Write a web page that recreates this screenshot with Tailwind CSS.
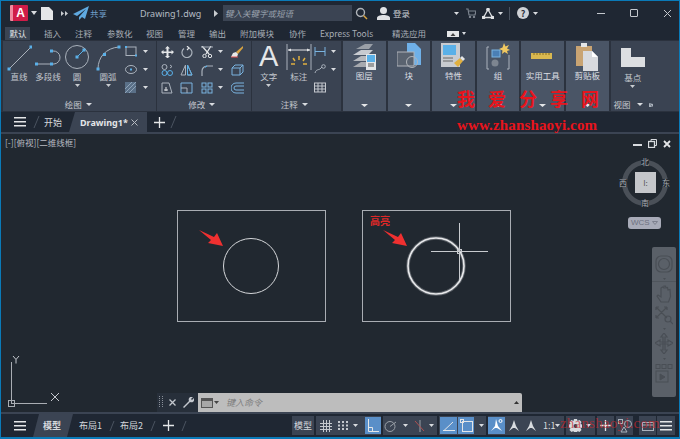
<!DOCTYPE html>
<html lang="en">
  <head>
    <meta charset="UTF-8" />
    <title>Drawing1.dwg</title>
    <script src="https://cdn.jsdelivr.net/npm/@tailwindcss/browser@4"></script>
  </head>
  <body class="bg-[#212830]">
    <div class="relative w-[680px] h-[439px] overflow-hidden flex flex-col border-x border-t border-b-[2px] border-[#0a7ab8] bg-[#212830] text-[10px] leading-none whitespace-nowrap text-[#c4c8ce] font-['Noto_Sans_CJK_SC','Noto_Sans',sans-serif]">

      <!-- title bar -->
      <div class="h-[24px] shrink-0 flex items-center bg-[#1f2733]">
        <div class="ml-[9px] w-[18px] h-[16px] rounded-[1px] bg-[#d01c48] border-l-[3px] border-[#f08aa0] flex items-center justify-center text-white text-[12px] font-bold font-['Liberation_Sans',sans-serif]">A</div>
        <svg class="ml-[3px]" width="6" height="4"><path d="M0 0h6L3 4z" fill="#d8dbdf" /></svg>
        <svg class="ml-[4px]" width="12" height="13"><path d="M0 0h8l4 4v9H0z" fill="#e4e6e8" /></svg>
        <svg class="ml-[8px]" width="7" height="7"><path d="M0 1l3 2.500L0 6zM4 1l3 2.500L4 6z" fill="#c8ccd0" /></svg>
        <svg class="ml-[5px]" width="16" height="14"><path d="M16 0L0 8l4 2 9-7-7 8v3l3-3 3 2z" fill="#5fa9e0" /></svg>
        <span class="ml-[1px] w-[17px] text-[#6f9fca] text-[8.500px]">共享</span>
        <span class="ml-[33px] w-[60px] text-[9px] text-[#b5bcc4] font-['Noto_Sans',sans-serif]">Drawing1.dwg</span>
        <svg class="ml-[14px]" width="4" height="7"><path d="M0 0l4 3.500L0 7z" fill="#c8ccd0" /></svg>
        <div class="ml-[5px] w-[129px] h-[16px] bg-[#3b4453] flex items-center pl-[2px] italic text-[8.500px] text-[#9aa2ad]">键入关键字或短语</div>
        <svg class="ml-[3px]" width="13" height="13" fill="none" stroke="#aeb3b9" stroke-width="1.400"><circle cx="5.500" cy="5.500" r="4" /><path d="M8.500 8.500L12 12" stroke="#d9a441" /></svg>
        <svg class="ml-[9px]" width="13" height="13" fill="#e0e2e5"><circle cx="6.500" cy="3.500" r="3.500" /><path d="M0 13v-2c0-2 3-3 6.500-3s6.500 1 6.500 3v2z" /></svg>
        <span class="ml-[3px] w-[18px] text-[8.500px] text-[#c9cdd2]">登录</span>
        <svg class="ml-[43px]" width="5" height="3"><path d="M0 0h5L2.500 3z" fill="#d8dbdf" /></svg>
        <svg class="ml-[7px]" width="10" height="10" fill="none" stroke="#7d8590" stroke-width="1.200"><path d="M0 1h2l1 6h6l1-4H3" /><circle cx="4" cy="9" r=".6" /><circle cx="8" cy="9" r=".6" /></svg>
        <svg class="ml-[6px]" width="12" height="11" fill="none" stroke="#dfe1e4" stroke-width="1.300"><path d="M6 1.500L1.500 9.500h9z" /><circle cx="6" cy="1.500" r="1.200" fill="#dfe1e4" /><circle cx="1.500" cy="9.500" r="1.200" fill="#dfe1e4" /><circle cx="10.500" cy="9.500" r="1.200" fill="#dfe1e4" /></svg>
        <svg class="ml-[4px]" width="5" height="3"><path d="M0 0h5L2.500 3z" fill="#d8dbdf" /></svg>
        <div class="ml-[6px] w-px h-[13px] bg-[#4a5360]"></div>
        <div class="ml-[7px] w-[12px] h-[12px] rounded-full bg-[#cfd2d6] flex items-center justify-center text-[9px] font-bold text-[#2a313c]">?</div>
        <svg class="ml-[4px]" width="5" height="3"><path d="M0 0h5L2.500 3z" fill="#d8dbdf" /></svg>
        <div class="ml-[59px] w-[8px] h-px bg-[#c4c8ce]"></div>
        <div class="ml-[25px] w-[8px] h-[8px] rounded-[1px] border border-[#c4c8ce]"></div>
        <svg class="ml-[25px]" width="9" height="9" stroke="#c4c8ce"><path d="M1 1l7 7M8 1L1 8" /></svg>
      </div>

      <!-- ribbon tabs -->
      <div class="h-[15px] shrink-0 flex items-end bg-[#1f2733] text-[8.500px] text-[#a7adb5]">
        <span class="ml-[4px] w-[25px] h-[13px] bg-[#3b4453] text-[#e2e4e7] flex items-center justify-center pl-[1px]">默认</span>
        <div class="ml-[14px] flex items-center h-[13px]">
          <span class="w-[17px]">插入</span>
          <span class="ml-[14px] w-[17px]">注释</span>
          <span class="ml-[15px] w-[25px]">参数化</span>
          <span class="ml-[14px] w-[17px]">视图</span>
          <span class="ml-[15px] w-[17px]">管理</span>
          <span class="ml-[14px] w-[17px]">输出</span>
          <span class="ml-[14px] w-[35px]">附加模块</span>
          <span class="ml-[14px] w-[17px]">协作</span>
          <span class="ml-[14px] w-[57px]">Express Tools</span>
          <span class="ml-[15px] w-[34px]">精选应用</span>
          <svg class="ml-[21px]" width="12" height="6"><rect width="12" height="6" fill="#e4e6e8" /><path d="M3.500 5l2.500-3 2.500 3z" fill="#444" /></svg>
          <svg class="ml-[3px]" width="4" height="3"><path d="M0 0h4L2 3z" fill="#d8dbdf" /></svg>
        </div>
      </div>

      <!-- ribbon -->
      <div class="h-[72px] shrink-0 flex bg-[#2b323e] pt-px pb-px pl-[2px] gap-px text-[8.500px]">
        <!-- 绘图 -->
        <div class="w-[154px] bg-[#3a4352] flex flex-col">
          <div class="flex h-[57px]">
            <div class="w-[32px] flex flex-col items-center">
              <svg class="mt-[2px]" width="26" height="28" fill="none" stroke="#aab2bc"><path d="M3 26L25 4" /><rect x="1.500" y="24.500" width="3" height="3" fill="#5ab0e8" stroke="none" /><rect x="23.500" y="2.500" width="3" height="3" fill="#5ab0e8" stroke="none" /></svg>
              <span class="mt-[1px]">直线</span>
            </div>
            <div class="w-[26px] flex flex-col items-center">
              <svg class="mt-[2px]" width="26" height="28" fill="none" stroke="#aab2bc"><path d="M2 21h17M17 8h1a6.500 6.500 0 0 1 1 13" /><rect x="0" y="19.500" width="3" height="3" fill="#5ab0e8" stroke="none" /><rect x="15" y="19.500" width="3" height="3" fill="#5ab0e8" stroke="none" /><rect x="15" y="6.500" width="3" height="3" fill="#5ab0e8" stroke="none" /></svg>
              <span class="mt-[1px]">多段线</span>
            </div>
            <div class="w-[32px] flex flex-col items-center">
              <svg class="mt-[1px]" width="26" height="29" fill="none" stroke="#aab2bc"><circle cx="13" cy="15" r="11.500" /><path d="M13 15l7-7" stroke="#5ab0e8" /><rect x="11.500" y="13.500" width="3" height="3" fill="#5ab0e8" stroke="none" /><rect x="18.500" y="6.500" width="3" height="3" fill="#5ab0e8" stroke="none" /></svg>
              <span class="mt-[1px]">圆</span>
              <svg class="mt-[3px]" width="5" height="3"><path d="M0 0h5L2.500 3z" fill="#c8ccd0" /></svg>
            </div>
            <div class="w-[30px] flex flex-col items-center">
              <svg class="mt-[2px]" width="26" height="28" fill="none" stroke="#aab2bc"><path d="M3 26C3 14 11 5 24 4" /><rect x="1.500" y="24.500" width="3" height="3" fill="#5ab0e8" stroke="none" /><rect x="8" y="10" width="3" height="3" fill="#5ab0e8" stroke="none" /><rect x="22.500" y="2.500" width="3" height="3" fill="#5ab0e8" stroke="none" /></svg>
              <span class="mt-[1px]">圆弧</span>
              <svg class="mt-[3px]" width="5" height="3"><path d="M0 0h5L2.500 3z" fill="#c8ccd0" /></svg>
            </div>
            <div class="ml-[2px] flex flex-col pt-[5px] gap-[7px]">
              <div class="flex items-center h-[11px]">
                <svg width="12" height="11" fill="none" stroke="#aab2bc"><rect x="1" y="1" width="10" height="8.500" /><rect y="0" width="2" height="2" fill="#5ab0e8" stroke="none" /><rect x="10" y="8.500" width="2" height="2" fill="#5ab0e8" stroke="none" /></svg>
                <svg class="ml-[6px]" width="5" height="3"><path d="M0 0h5L2.500 3z" fill="#d8dbdf" /></svg>
              </div>
              <div class="flex items-center h-[11px]">
                <svg width="12" height="11" fill="none" stroke="#aab2bc"><ellipse cx="6" cy="5.500" rx="5.500" ry="4" /><rect x="5" y="4.500" width="2" height="2" fill="#5ab0e8" stroke="none" /></svg>
                <svg class="ml-[6px]" width="5" height="3"><path d="M0 0h5L2.500 3z" fill="#d8dbdf" /></svg>
              </div>
              <div class="flex items-center h-[11px]">
                <svg width="12" height="11"><rect width="11" height="11" fill="#5a7088" /><path d="M0 7l7-7M0 11L11 0M4 11l7-7" stroke="#8fa3b8" /></svg>
                <svg class="ml-[6px]" width="5" height="3"><path d="M0 0h5L2.500 3z" fill="#d8dbdf" /></svg>
              </div>
            </div>
          </div>
          <div class="flex-1 flex items-center justify-center gap-[4px] pr-[2px]">绘图 <svg width="6" height="3"><path d="M0 0h6L3 3z" fill="#d8dbdf" /></svg></div>
        </div>
        <!-- 修改 -->
        <div class="w-[95px] bg-[#3a4352] flex flex-col">
          <div class="h-[57px] grid grid-cols-[20px_21px_30px_20px] grid-rows-[11px_11px_11px] gap-y-[7px] pt-[5px] pl-[3px]">
            <svg width="13" height="12" class="ml-[1px]" fill="#e4e6e8"><path d="M6.500 0l2.500 2.500H7.500v3h3V4L13 6l-2.500 2.500V7h-3v3H9l-2.500 2.500L4 10h1.500V7h-3v1.500L0 6l2.500-2V5.500h3v-3H4z" /></svg>
            <svg width="13" height="12" fill="none" stroke="#aab2bc" stroke-width="1.200"><path d="M9 2a5 5 0 1 1-5 .5" /><path d="M7 0l2 2-2 2" stroke="#e4e6e8" /></svg>
            <div class="flex items-center">
              <svg width="13" height="12" fill="none" stroke="#e4e6e8"><path d="M1 0l7 8M10 0L5 8" stroke-width="1.300" /><circle cx="3.500" cy="10" r="1.700" /><circle cx="9" cy="10" r="1.700" /><path d="M0 1h12" stroke="#aab2bc" /></svg>
              <svg class="ml-[4px]" width="5" height="3"><path d="M0 0h5L2.500 3z" fill="#d8dbdf" /></svg>
            </div>
            <svg width="13" height="12"><path d="M12 0L5 6l2 2 5-6z" fill="#d9a441" /><path d="M0 11l2-4 3-1 2 2-1 3z" fill="#e8e8e8" /><path d="M0 11h7" stroke="#e05050" /></svg>

            <svg width="13" height="12" class="ml-[1px]" fill="none" stroke="#aab2bc"><circle cx="3.500" cy="3" r="2.500" /><path d="M9 1l2 1.500L9 4" /><circle cx="3.500" cy="9" r="2.500" stroke="#5ab0e8" /><circle cx="9" cy="9" r="2.500" stroke="#5ab0e8" /></svg>
            <svg width="13" height="12" fill="none" stroke="#aab2bc"><path d="M5.500 1v10H1zM7.500 1v10H12z" /><path d="M7.500 1v10H12z" stroke="#5ab0e8" /></svg>
            <div class="flex items-center">
              <svg width="13" height="12" fill="none" stroke="#aab2bc" stroke-width="1.200"><path d="M1 12V7a5 5 0 0 1 5-5h6" /><path d="M4 3.500a5 5 0 0 1 2-1.500" stroke="#5ab0e8" /></svg>
              <svg class="ml-[4px]" width="5" height="3"><path d="M0 0h5L2.500 3z" fill="#d8dbdf" /></svg>
            </div>
            <svg width="13" height="12" fill="none" stroke="#7ab4e0"><path d="M1 4h8v7H1zM1 4l3-3h8v7l-3 3M9 4l3-3" /></svg>

            <svg width="13" height="12" class="ml-[1px]" fill="none" stroke="#aab2bc"><path d="M1 1h7l3 10H1z" /><path d="M5 5v4M3 8h4" stroke="#e4e6e8" /></svg>
            <svg width="13" height="12" fill="none" stroke="#7ab4e0"><path d="M1 1h11v10H1z" /><path d="M1 6h6v5" stroke="#aab2bc" /></svg>
            <div class="flex items-center">
              <svg width="13" height="12" fill="none" stroke="#7ab4e0"><rect x="1" y="1" width="4" height="4" /><rect x="7" y="1" width="4" height="4" /><rect x="1" y="7" width="4" height="4" /><rect x="7" y="7" width="4" height="4" /></svg>
              <svg class="ml-[4px]" width="5" height="3"><path d="M0 0h5L2.500 3z" fill="#d8dbdf" /></svg>
            </div>
            <svg width="13" height="12" fill="none" stroke="#7ab4e0"><path d="M13 1H5a4.500 4.500 0 0 0 0 10h8M13 4H5a1.500 1.500 0 0 0 0 4h8" /></svg>
          </div>
          <div class="flex-1 flex items-center justify-center gap-[4px] pr-[4px]">修改 <svg width="6" height="3"><path d="M0 0h6L3 3z" fill="#d8dbdf" /></svg></div>
        </div>
        <!-- 注释 -->
        <div class="w-[90px] bg-[#3a4352] flex flex-col">
          <div class="flex h-[57px]">
            <div class="w-[34px] flex flex-col items-center">
              <span class="mt-[2px] h-[26px] text-[29px] leading-[26px] text-[#e4e6e8] font-['Liberation_Sans',sans-serif]">A</span>
              <span class="mt-[3px]">文字</span>
              <svg class="mt-[3px]" width="5" height="3"><path d="M0 0h5L2.500 3z" fill="#c8ccd0" /></svg>
            </div>
            <div class="w-[26px] flex flex-col items-center">
              <svg class="mt-[3px]" width="26" height="27" fill="none" stroke="#aab2bc"><path d="M1 0v26M25 0v26" /><path d="M2 6h22" stroke="#e4e6e8" /><path d="M2 6l3-1.500v3zM24 6l-3-1.500v3z" fill="#e4e6e8" stroke="none" /><path d="M13 12v4M7 14l2 3M19 14l-2 3M5 20h4M17 20h4" stroke="#e0b040" stroke-width="1.500" /></svg>
              <span class="mt-[1px]">标注</span>
            </div>
            <div class="ml-[2px] flex flex-col pt-[5px] gap-[7px]">
              <div class="flex items-center h-[11px]">
                <svg width="12" height="11" fill="none" stroke="#7ab4e0"><path d="M1 1v9M11 1v9M1 5.500h10" /></svg>
                <svg class="ml-[5px]" width="5" height="3"><path d="M0 0h5L2.500 3z" fill="#d8dbdf" /></svg>
              </div>
              <div class="flex items-center h-[11px]">
                <svg width="12" height="11" fill="none" stroke="#aab2bc"><path d="M1 9c1-4 4-3 5-4s1-1 2-2" /><circle cx="9.500" cy="2.500" r="1.800" /></svg>
                <svg class="ml-[5px]" width="5" height="3"><path d="M0 0h5L2.500 3z" fill="#d8dbdf" /></svg>
              </div>
              <svg width="12" height="11" fill="none" stroke="#c4c8ce"><rect x=".5" y="1" width="11" height="9" /><path d="M.5 4h11M.5 7h11M4 1v9M8 1v9" /></svg>
            </div>
          </div>
          <div class="flex-1 flex items-center justify-center gap-[4px] pr-[4px]">注释 <svg width="6" height="3"><path d="M0 0h6L3 3z" fill="#d8dbdf" /></svg></div>
        </div>

        <!-- 图层 -->
        <div class="ml-px w-[43px] bg-[#4a5566] flex flex-col items-center">
          <svg class="mt-[2px]" width="24" height="28"><path d="M4 6l9-5h8l-4 5z" fill="#9aa0a8" /><path d="M1 12l8-5h12l-5 5z" fill="#c8cbd0" /><path d="M1 18l8-5h12l-5 5z" fill="#b6b9be" /><path d="M1 24l8-5h6v5z" fill="#a6a9ae" /><rect x="14" y="11" width="10" height="16" fill="#e4e6e8" /><rect x="15" y="12" width="8" height="7" fill="#5ab0e8" /><path d="M16 21h6M16 23h6" stroke="#555" /></svg>
          <span class="text-[#dcdfe3]">图层</span>
          <svg class="mt-auto mb-[4px]" width="7" height="3"><path d="M0 0h7L3.500 3z" fill="#e4e6e8" /></svg>
        </div>
        <!-- 块 -->
        <div class="ml-px w-[43px] bg-[#4a5566] flex flex-col items-center">
          <svg class="mt-[2px]" width="24" height="28" fill="none"><path d="M10 0h8l6 6v16H10z" fill="#6fb0e8" /><rect x="0" y="9" width="17" height="14" fill="#5a6370" stroke="#b0b4ba" /><circle cx="15" cy="19" r="5.500" stroke="#b0b4ba" /></svg>
          <span class="text-[#dcdfe3]">块</span>
          <svg class="mt-auto mb-[4px]" width="7" height="3"><path d="M0 0h7L3.500 3z" fill="#e4e6e8" /></svg>
        </div>
        <!-- 特性 -->
        <div class="ml-px w-[43px] bg-[#4a5566] flex flex-col items-center">
          <svg class="mt-[2px]" width="24" height="28"><rect x="0" y="0" width="19" height="24" fill="#c8cbd0" /><rect x="2" y="2" width="13" height="10" fill="#5ab0e8" /><path d="M2 15h10M2 18h10" stroke="#666" /><path d="M13 20l6-5 3 3-5 6z" fill="#e0b040" /><path d="M19 15l2-2 3 3-2 2z" fill="#e4e6e8" /></svg>
          <span class="text-[#dcdfe3]">特性</span>
          <svg class="mt-auto mb-[4px]" width="7" height="3"><path d="M0 0h7L3.500 3z" fill="#e4e6e8" /></svg>
        </div>
        <!-- 组 -->
        <div class="ml-px w-[43px] bg-[#4a5566] flex flex-col items-center">
          <svg class="mt-[2px]" width="24" height="28" fill="none"><path d="M3 4H1v22h2M21 26h2V12" stroke="#aab2bc" /><rect x="6" y="7" width="8" height="7" fill="#4a7fb5" stroke="#7ab4e0" /><circle cx="9" cy="20" r="3.500" fill="#7d8590" /><path d="M18 0l1.500 3.500L23 2l-2 3.500L24 7l-3 1 1 3-3.500-2L16 11l.5-3.500L13 6l3.500-1.500z" fill="#f0c860" /></svg>
          <span class="text-[#dcdfe3]">组</span>
          <svg class="mt-auto mb-[4px]" width="7" height="3"><path d="M0 0h7L3.500 3z" fill="#e4e6e8" /></svg>
        </div>
        <!-- 实用工具 -->
        <div class="ml-px w-[43px] bg-[#4a5566] flex flex-col items-center">
          <svg class="mt-[2px]" width="24" height="28"><rect y="10" width="21" height="6" fill="#d9b850" /><path d="M3 10v2M6 10v2M9 10v2M12 10v2M15 10v2M18 10v2" stroke="#8a7020" /></svg>
          <span class="text-[#dcdfe3]">实用工具</span>
          <svg class="mt-auto mb-[4px]" width="7" height="3"><path d="M0 0h7L3.500 3z" fill="#e4e6e8" /></svg>
        </div>
        <!-- 剪贴板 -->
        <div class="ml-px w-[43px] bg-[#4a5566] flex flex-col items-center">
          <svg class="mt-[2px]" width="24" height="28"><path d="M1 3h16v20H1z" fill="#c9a473" /><rect x="6" y="0" width="6" height="4" fill="#e4e6e8" /><path d="M8 8h9l6 6v14H8z" fill="#d8dade" /><path d="M17 8l6 6h-6z" fill="#fff" /></svg>
          <span class="text-[#dcdfe3]">剪贴板</span>
          <svg class="mt-auto mb-[4px]" width="7" height="3"><path d="M0 0h7L3.500 3z" fill="#e4e6e8" /></svg>
        </div>
        <!-- 视图 -->
        <div class="ml-px w-[69px] bg-[#3a4352] flex flex-col">
          <div class="h-[57px] flex flex-col items-center pr-[24px]">
            <svg class="mt-[7px]" width="24" height="19"><path d="M0 0h10v9h14v10H0z" fill="#dcdee1" /></svg>
            <span class="mt-[6px]">基点</span>
            <svg class="mt-[3px]" width="5" height="3"><path d="M0 0h5L2.500 3z" fill="#c8ccd0" /></svg>
          </div>
          <div class="flex-1 flex items-center pl-[3px]">
            视图
            <svg class="ml-[6px]" width="6" height="3"><path d="M0 0h6L3 3z" fill="#d8dbdf" /></svg>
            <svg class="ml-[6px]" width="4" height="4"><path d="M0 0l4 4V1zM0 0l3 4H0z" fill="#aab2bc" /></svg>
          </div>
        </div>
      </div>

      <!-- document tabs -->
      <div class="h-[20px] shrink-0 flex items-center bg-[#1f2733] text-[#d5d8dc]">
        <svg class="ml-[13px]" width="12" height="10" fill="#e4e6e8"><rect width="12" height="1.500" /><rect y="4" width="12" height="1.500" /><rect y="8" width="12" height="1.500" /></svg>
        <svg class="ml-[7px]" width="7" height="14" stroke="#4a5360"><path d="M1 13L6 1" /></svg>
        <span class="ml-[4px] w-[18px] text-[9px]">开始</span>
        <div class="ml-[7px] h-full w-[78px] bg-[#3b4453] [clip-path:polygon(6px_0,100%_0,100%_100%,0_100%)] flex items-center pl-[11px]">
          <span class="w-[45px] text-[9px] font-bold font-['Noto_Sans',sans-serif] text-[#e4e6e8]">Drawing1*</span>
          <svg class="ml-[6px]" width="7" height="7" stroke="#b8bcc2"><path d="M.5.5l6 6M6.500.5l-6 6" /></svg>
        </div>
        <svg class="ml-[7px]" width="11" height="11" stroke="#e4e6e8" stroke-width="1.300"><path d="M5.500 0v11M0 5.500h11" /></svg>
        <svg class="ml-[5px]" width="7" height="14" stroke="#4a5360"><path d="M1 13L6 1" /></svg>
      </div>
      <div class="h-[2px] shrink-0 bg-[#3b4453]"></div>

      <!-- drawing area -->
      <div class="relative flex-1 bg-[#212830]">
        <span class="absolute left-[4px] top-[4px] text-[8.500px] text-[#b8bcc2]">[-][俯视][二维线框]</span>

        <!-- drawing: page y minus 134, page x minus 1 -->
        <svg class="absolute inset-0" width="678" height="278" fill="none">
          <rect x="176.500" y="76.500" width="148" height="111" stroke="#a9adb3" />
          <rect x="361.500" y="76.500" width="148" height="111" stroke="#a9adb3" />
          <circle cx="250" cy="132" r="27.500" stroke="#d5d7da" />
          <circle cx="435" cy="132" r="28" stroke="#dfe1e3" stroke-width="3.500" stroke-opacity=".3" />
          <circle cx="435" cy="132" r="28" stroke="#e8e9eb" stroke-width="1.600" />
          <path d="M430 117.500h57M458.500 89v57" stroke="#c8cbcf" />
          <rect x="456.500" y="115.500" width="4" height="4" stroke="#c8cbcf" />
          <path d="M198 96l15 7 3-4 6 13-15-3 3-3z" fill="#f03030" />
          <path d="M382 96l15 7 3-4 6 13-15-3 3-3z" fill="#f03030" />
          <path d="M10.500 228v41M10 269.500h36" stroke="#a9adb3" />
          <rect x="7.500" y="266.500" width="6" height="6" stroke="#a9adb3" />
          <path d="M50 259l8 8M58 259l-8 8" stroke="#c4c8ce" />
          <path d="M12 222l3 3.500 3-3.500M15 225.500v4" stroke="#c4c8ce" />
        </svg>
        <span class="absolute left-[369px] top-[82px] text-[10px] font-bold text-[#e02828]">高亮</span>

        <!-- viewport controls -->
        <div class="absolute left-[632px] top-[7px] w-[9px] h-[2px] bg-[#d8dbdf] mt-[3px]"></div>
        <svg class="absolute left-[647px] top-[5px]" width="9" height="9" fill="none" stroke="#d8dbdf"><rect x=".5" y="2.500" width="6" height="6" stroke-width="1.300" /><path d="M3 2.500V.5h5.500v6h-2" /></svg>
        <svg class="absolute left-[662px] top-[6px]" width="8" height="8" stroke="#e4e6e8" stroke-width="1.800"><path d="M1 1l6 6M7 1L1 7" /></svg>

        <!-- viewcube -->
        <div class="absolute left-[621px] top-[26px] w-[46px] h-[46px] rounded-full border-[5px] border-[#4a5058]"></div>
        <div class="absolute left-[634px] top-[38px] w-[21px] h-[21px] bg-[#c5c7cb] flex items-center justify-center text-[8px] text-[#555]">I:</div>
        <span class="absolute left-[640px] top-[24px] text-[8px] bg-[#212830] text-[#a9adb3]">北</span>
        <span class="absolute left-[640px] top-[65px] text-[8px] bg-[#212830] text-[#a9adb3]">南</span>
        <span class="absolute left-[618px] top-[45px] text-[8px] bg-[#212830] text-[#a9adb3]">西</span>
        <span class="absolute left-[661px] top-[45px] text-[8px] bg-[#212830] text-[#a9adb3]">东</span>
        <div class="absolute left-[627px] top-[83px] w-[33px] h-[12px] rounded-[3px] bg-[#a8abb8] flex items-center pl-[3px] gap-[2px] text-[8px] text-[#6e7180] font-['Liberation_Sans',sans-serif]">WCS <svg width="6" height="4" fill="none" stroke="#7d808e"><path d="M.5.5h5L3 3.500z" /></svg></div>

        <!-- navigation bar -->
        <div class="absolute left-[651px] top-[113px] w-[24px] h-[150px] rounded-[2px] bg-[#5a6068] flex flex-col items-center">
          <svg class="mt-[8px]" width="18" height="18" fill="none" stroke="#494e55" stroke-width="1.200"><rect x="1" y="1" width="16" height="16" rx="5" /><circle cx="9" cy="9" r="5.500" /></svg>
          <svg class="mt-[5px]" width="3" height="2"><path d="M0 0h3L1.500 2z" fill="#494e55" /></svg>
          <div class="w-full h-px bg-[#4f555c] mt-[1px]"></div>
          <svg class="mt-[3px]" width="17" height="18" fill="none" stroke="#494e55" stroke-width="1.200"><path d="M5 17l-4-6 1-1 3 2V3l1.500-1L8 3V1l1.500 0L10 3l1.500-.5L12 5l2-.5.500 7-2 5.500z" /></svg>
          <svg class="mt-[3px]" width="18" height="19" fill="none" stroke="#494e55" stroke-width="1.200"><path d="M1 1l11 11M12 1L1 12M1 1h3M1 1v3M12 1h-3M12 1v3M1 12v-3M1 12h3" /><circle cx="13" cy="13" r="3" /><path d="M15 15l3 3" /></svg>
          <svg class="mt-[3px]" width="3" height="2"><path d="M0 0h3L1.500 2z" fill="#494e55" /></svg>
          <svg class="mt-[3px]" width="18" height="21" fill="none" stroke="#494e55" stroke-width="1.200"><path d="M9 0l3 4h-2v13h2l-3 4-3-4h2V4H6zM0 10l5-3v2h8V7l5 3-5 3v-2H5v2z" /></svg>
          <svg class="mt-[4px]" width="3" height="2"><path d="M0 0h3L1.500 2z" fill="#494e55" /></svg>
          <svg class="mt-[4px]" width="18" height="20" fill="none" stroke="#494e55"><rect x="1" y=".5" width="4" height="4" /><rect x="7" y=".5" width="4" height="4" /><rect x="13" y=".5" width="4" height="4" /><rect x="1" y="7" width="12" height="11" /><path d="M5 10l5 3-5 3z" fill="#494e55" /></svg>
        </div>

        <!-- command line -->
        <div class="absolute left-[156px] bottom-0 h-[19px] flex">
          <div class="w-[41px] bg-[#272f3a] flex items-center">
            <svg class="ml-[2px]" width="4" height="13" fill="#8a9099"><rect width="1" height="1" /><rect x="3" width="1" height="1" /><rect y="2" width="1" height="1" /><rect x="3" y="2" width="1" height="1" /><rect y="4" width="1" height="1" /><rect x="3" y="4" width="1" height="1" /><rect y="6" width="1" height="1" /><rect x="3" y="6" width="1" height="1" /><rect y="8" width="1" height="1" /><rect x="3" y="8" width="1" height="1" /><rect y="10" width="1" height="1" /><rect x="3" y="10" width="1" height="1" /></svg>
            <svg class="ml-[6px]" width="7" height="7" stroke="#c4c8ce" stroke-width="1.300"><path d="M.5.5l6 6M6.500.5l-6 6" /></svg>
            <svg class="ml-[7px]" width="11" height="11" fill="#c4c8ce"><path d="M0 10l6-6a3 3 0 0 1 4-4L8 2l1 1 2-2a3 3 0 0 1-4 4l-6 6z" /></svg>
          </div>
          <div class="w-[324px] bg-[#bdbdbd] rounded-tr-[2px] flex items-center">
            <svg class="ml-[3px]" width="12" height="10"><rect x=".5" y=".5" width="11" height="9" fill="#a8a8a8" stroke="#555" /><rect x="1" y="1" width="10" height="2" fill="#555" /></svg>
            <svg class="ml-[1px]" width="5" height="3"><path d="M0 0h5L2.500 3z" fill="#444" /></svg>
            <span class="ml-[7px] italic text-[9px] text-[#7d7d7d]">键入命令</span>
            <svg class="ml-auto mr-[3px]" width="5" height="3"><path d="M0 3h5L2.500 0z" fill="#333" /></svg>
          </div>
        </div>
      </div>
      <div class="h-[2px] shrink-0 bg-[#3b4453]"></div>

      <!-- status bar -->
      <div class="h-[23px] shrink-0 flex items-center bg-[#1f2733] text-[#d5d8dc] text-[9px]">
        <svg class="ml-[13px]" width="12" height="10" fill="#e4e6e8"><rect width="12" height="1.500" /><rect y="4" width="12" height="1.500" /><rect y="8" width="12" height="1.500" /></svg>
        <div class="ml-[7px] h-full w-[40px] bg-[#3b4453] [clip-path:polygon(6px_0,100%_0,calc(100%-6px)_100%,0_100%)] flex items-center justify-center font-bold pr-[2px]">模型</div>
        <span class="ml-[6px] w-[22px]">布局1</span>
        <svg class="ml-[8px]" width="6" height="12" stroke="#4a5360"><path d="M1 11L5 1" /></svg>
        <span class="ml-[5px] w-[23px]">布局2</span>
        <svg class="ml-[7px]" width="6" height="12" stroke="#4a5360"><path d="M1 11L5 1" /></svg>
        <svg class="ml-[7px]" width="11" height="11" stroke="#e4e6e8" stroke-width="1.300"><path d="M5.500 0v11M0 5.500h11" /></svg>
        <svg class="ml-[7px]" width="6" height="12" stroke="#4a5360"><path d="M1 11L5 1" /></svg>

        <div class="ml-auto mr-[4px] h-[19px] flex items-center gap-[2px]">
          <span class="w-[22px] h-full bg-[#3b4453] flex items-center justify-center">模型</span>
          <div class="w-[65px] h-full bg-[#3b4453] flex items-center">
            <svg class="ml-[4px]" width="12" height="12" stroke="#c4c8ce"><path d="M0 3.500h12M0 6.500h12M0 9.500h12M3.500 0v12M6.500 0v12M9.500 0v12" /></svg>
            <svg class="ml-[6px]" width="12" height="9" fill="#c4c8ce"><rect width="2" height="2" /><rect x="4" width="2" height="2" /><rect x="8" width="2" height="2" /><rect y="3.500" width="2" height="2" /><rect x="4" y="3.500" width="2" height="2" /><rect x="8" y="3.500" width="2" height="2" /><rect y="7" width="2" height="2" /><rect x="4" y="7" width="2" height="2" /><rect x="8" y="7" width="2" height="2" /></svg>
            <svg class="ml-[3px]" width="5" height="3"><path d="M0 0h5L2.500 3z" fill="#d8dbdf" /></svg>
            <div class="ml-[7px] w-[16px] h-[17px] bg-[#5a8fc8] flex items-center justify-center">
              <svg width="12" height="13" fill="none" stroke="#e4e6e8"><path d="M1.500 0v12.500H12M1.500 8.500h4v4" /></svg>
            </div>
          </div>
          <div class="w-[54px] h-full bg-[#3b4453] flex items-center">
            <svg class="ml-[1px]" width="13" height="12" fill="none" stroke="#9aa0a8"><circle cx="6" cy="6.500" r="5" /><path d="M6 6.500L12 2" /></svg>
            <svg class="ml-[6px]" width="5" height="3"><path d="M0 0h5L2.500 3z" fill="#d8dbdf" /></svg>
            <svg class="ml-[6px]" width="12" height="12" stroke="#9aa0a8"><path d="M6 0v12" /><path d="M1 1l9 10" stroke="#b05050" /></svg>
            <svg class="ml-[3px]" width="5" height="3"><path d="M0 0h5L2.500 3z" fill="#d8dbdf" /></svg>
          </div>
          <div class="w-[47px] h-full bg-[#3b4453] flex items-center gap-[1px]">
            <div class="ml-px w-[17px] h-[17px] bg-[#5a8fc8] flex items-center justify-center">
              <svg width="12" height="10" fill="none" stroke="#e4e6e8"><path d="M0 9.500h12M1 9.500l9-8.500" /></svg>
            </div>
            <div class="w-[16px] h-[17px] bg-[#5a8fc8] flex items-center justify-center">
              <svg width="13" height="13" fill="none" stroke="#e4e6e8"><rect x="2.500" y="2.500" width="10" height="10" /><rect x="0.500" y="0.500" width="3" height="3" /></svg>
            </div>
            <svg class="ml-[4px]" width="5" height="3"><path d="M0 0h5L2.500 3z" fill="#d8dbdf" /></svg>
          </div>
          <div class="w-[76px] h-full bg-[#3b4453] flex items-center">
            <div class="w-[17px] h-[17px] bg-[#5a8fc8] flex items-center justify-center">
              <svg width="13" height="13" fill="#fff"><path d="M6 0l2 7 4 5-5-3-2 0-4 3 4-5z" /><circle cx="10.500" cy="2" r="1.500" fill="none" stroke="#fff" /></svg>
            </div>
            <svg class="ml-[3px]" width="12" height="13" fill="#d8dbdf"><path d="M6 1l2 6 3 5-4-3H5l-4 3 3-5z" /></svg>
            <svg class="ml-[5px]" width="12" height="13" fill="#d8dbdf"><path d="M6 1l2 6 3 5-4-3H5l-4 3 3-5z" /></svg>
            <span class="ml-[6px] w-[9px]">1:1</span>
            <svg class="ml-[3px]" width="5" height="3"><path d="M0 0h5L2.500 3z" fill="#d8dbdf" /></svg>
          </div>
          <div class="w-[29px] h-full bg-[#3b4453] flex items-center">
            <svg class="ml-[3px]" width="13" height="13" fill="#d8dbdf"><path d="M5 0h3l.500 2 2-1 2 2-1 2 2 .500v3l-2 .500 1 2-2 2-2-1-.500 2H5l-.500-2-2 1-2-2 1-2L0 8.500v-3l1.500-.500-1-2 2-2 2 1z" /><circle cx="6.500" cy="7" r="2" fill="#3b4453" /></svg>
            <svg class="ml-[4px]" width="5" height="3"><path d="M0 0h5L2.500 3z" fill="#d8dbdf" /></svg>
          </div>
          <div class="w-[17px] h-full bg-[#3b4453] flex items-center justify-center">
            <svg width="11" height="11" stroke="#e4e6e8" stroke-width="1.300"><path d="M5.500 0v11M0 5.500h11" /></svg>
          </div>
          <div class="w-[17px] h-full bg-[#3b4453] flex items-center justify-center">
            <svg width="14" height="14" fill="none" stroke="#aab2bc"><rect x=".5" y=".5" width="4" height="4" /><circle cx="10" cy="5" r="3.500" /><path d="M6 8l3 5H3z" /></svg>
          </div>
          <div class="ml-[4px] w-[17px] h-full bg-[#3b4453] flex items-center justify-center">
            <svg width="12" height="10" fill="none" stroke="#aab2bc"><rect x=".5" y="1.500" width="11" height="8" /><path d="M.5 4h11" /></svg>
          </div>
          <div class="-ml-[1px] w-[18px] h-full bg-[#3b4453] flex items-center justify-center">
            <svg width="12" height="10" fill="#e4e6e8"><rect width="12" height="1.500" /><rect y="4" width="12" height="1.500" /><rect y="8" width="12" height="1.500" /></svg>
          </div>
        </div>
      </div>

      <!-- watermark over the screenshot -->
      <div class="absolute left-[456px] top-[88px] flex gap-[13px] text-[18px] font-bold text-[#e8141c] font-['Noto_Sans_CJK_SC',sans-serif]">
        <span>我</span><span>爱</span><span>分</span><span>享</span><span>网</span>
      </div>
      <span class="absolute left-[456px] top-[117px] text-[15px] tracking-[0.15px] font-bold text-[#e8141c] font-['Liberation_Serif',serif]">www.zhanshaoyi.com</span>
      <span class="absolute left-[559px] top-[415px] text-[15px] tracking-[0.2px] text-[#c8282c]/70 font-['Liberation_Serif',serif]">zhanshaoyi.com</span>
    </div>
  </body>
</html>
